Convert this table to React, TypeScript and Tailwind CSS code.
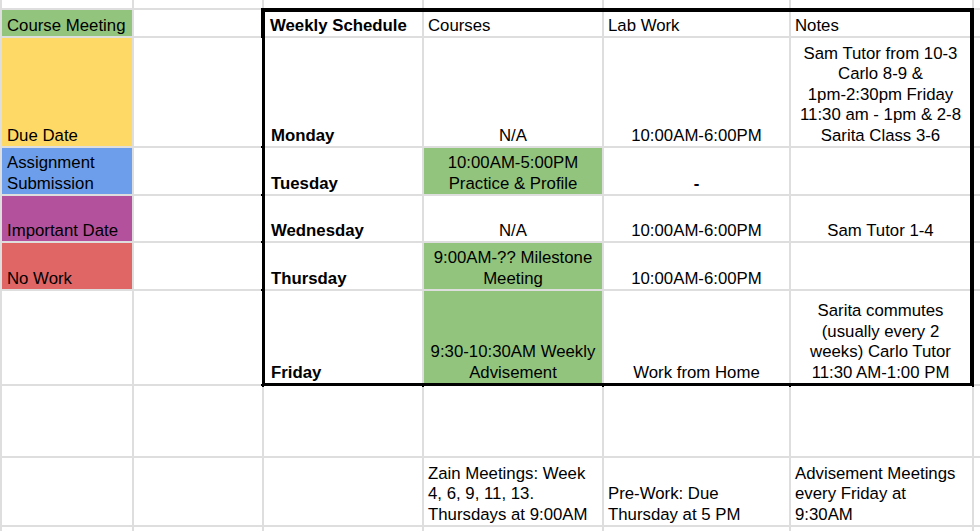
const cell = "bg-white px-[4px] flex flex-col justify-end";

function Blank() {
  return <div className="bg-white" />;
}

function Legend(props: { color: string; children?: React.ReactNode }) {
  return <div className={`${props.color} px-[5px] flex flex-col justify-end`}>{props.children}</div>;
}

function Center(props: { green?: boolean; bold?: boolean; lines: string[] }) {
  return (
    <div
      className={`${props.green ? "bg-[#93c47d]" : "bg-white"} ${
        props.bold ? "font-bold" : ""
      } px-[4px] flex flex-col justify-end items-center text-center`}
    >
      {props.lines.map((l) => (
        <span key={l} className="whitespace-nowrap">
          {l}
        </span>
      ))}
    </div>
  );
}

function Day(props: { name: string }) {
  return <div className="bg-white pl-[6px] flex flex-col justify-end font-bold">{props.name}</div>;
}

function Lines(props: { lines: string[] }) {
  return (
    <div className={cell}>
      {props.lines.map((l) => (
        <span key={l} className="whitespace-nowrap">
          {l}
        </span>
      ))}
    </div>
  );
}

export default function App() {
  return (
    <div className="h-[531px] w-[980px] overflow-hidden bg-white font-['Liberation_Sans',Arial,sans-serif] text-[16.8px] leading-[20.5px] text-black">
      <div className="grid h-full grid-cols-[130px_128px_158px_178px_185px_181px_1fr] grid-rows-[8px_26px_108px_46px_45px_46px_93px_70px_67px_1fr] gap-[2px] bg-[#dedede] pl-[2px]">
        {/* top partial row */}
        <Blank />
        <Blank />
        <Blank />
        <Blank />
        <Blank />
        <Blank />
        <Blank />

        {/* header row */}
        <Legend color="bg-[#93c47d]">Course Meeting</Legend>
        <Blank />
        <div className="col-span-4 row-span-6 -mb-[3px] -ml-[3px] -mr-[2px] -mt-[2px] border-4 border-black bg-[#dedede]">
          <div className="grid h-full grid-cols-[157px_178px_185px_1fr] grid-rows-[24px_108px_46px_45px_46px_92px] gap-[2px]">
            <div className="bg-white pl-[5px] flex flex-col justify-end font-bold">Weekly Schedule</div>
            <Lines lines={["Courses"]} />
            <Lines lines={["Lab Work"]} />
            <Lines lines={["Notes"]} />

            <Day name="Monday" />
            <Center lines={["N/A"]} />
            <Center lines={["10:00AM-6:00PM"]} />
            <Center
              lines={[
                "Sam Tutor from 10-3",
                "Carlo 8-9 &",
                "1pm-2:30pm Friday",
                "11:30 am - 1pm & 2-8",
                "Sarita Class 3-6",
              ]}
            />

            <Day name="Tuesday" />
            <Center green lines={["10:00AM-5:00PM", "Practice & Profile"]} />
            <Center bold lines={["-"]} />
            <Blank />

            <Day name="Wednesday" />
            <Center lines={["N/A"]} />
            <Center lines={["10:00AM-6:00PM"]} />
            <Center lines={["Sam Tutor 1-4"]} />

            <Day name="Thursday" />
            <Center green lines={["9:00AM-?? Milestone", "Meeting"]} />
            <Center lines={["10:00AM-6:00PM"]} />
            <Blank />

            <Day name="Friday" />
            <Center green lines={["9:30-10:30AM Weekly", "Advisement"]} />
            <Center lines={["Work from Home"]} />
            <Center
              lines={["Sarita commutes", "(usually every 2", "weeks) Carlo Tutor", "11:30 AM-1:00 PM"]}
            />
          </div>
        </div>
        <Blank />

        <Legend color="bg-[#ffd966]">Due Date</Legend>
        <Blank />
        <Blank />

        <Legend color="bg-[#6d9eeb]">
          <span>Assignment</span>
          <span>Submission</span>
        </Legend>
        <Blank />
        <Blank />

        <Legend color="bg-[#b4519c]">Important Date</Legend>
        <Blank />
        <Blank />

        <Legend color="bg-[#e06666]">No Work</Legend>
        <Blank />
        <Blank />

        <Blank />
        <Blank />
        <Blank />

        {/* empty row */}
        <Blank />
        <Blank />
        <Blank />
        <Blank />
        <Blank />
        <Blank />
        <Blank />

        {/* footnotes row */}
        <Blank />
        <Blank />
        <Blank />
        <Lines lines={["Zain Meetings: Week", "4, 6, 9, 11, 13.", "Thursdays at 9:00AM"]} />
        <Lines lines={["Pre-Work: Due", "Thursday at 5 PM"]} />
        <Lines lines={["Advisement Meetings", "every Friday at", "9:30AM"]} />
        <Blank />

        {/* bottom partial row */}
        <Blank />
        <Blank />
        <Blank />
        <Blank />
        <Blank />
        <Blank />
        <Blank />
      </div>
    </div>
  );
}
